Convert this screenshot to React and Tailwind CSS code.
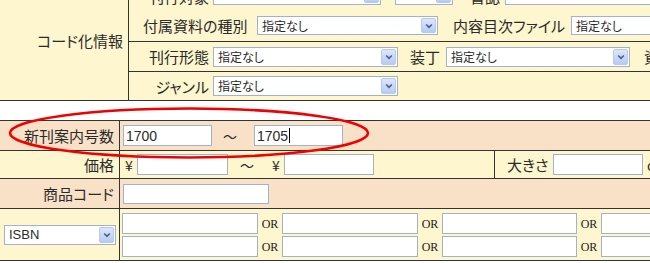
import React from "react";

const Chev = () => (
  <svg width="8" height="6" viewBox="0 0 8 6">
    <path d="M1.2 1.5 L4 4.3 L6.8 1.5" stroke="#4a5d8a" strokeWidth="1.6" fill="none" />
  </svg>
);

function Select({ className, text, textClass }) {
  return (
    <div className={"relative shrink-0 bg-white border border-[#9fb3cc] flex items-center " + className}>
      <span className={"pl-[4px] whitespace-nowrap " + (textClass || "text-[12px]")}>{text}</span>
      <div className="absolute right-[1px] top-[1px] bottom-[1px] w-[15px] rounded-[2px] border border-[#b9c9ea] bg-gradient-to-b from-[#dbe6fc] to-[#b7cbf3] flex items-center justify-center">
        <Chev />
      </div>
    </div>
  );
}

function Input({ className, children }) {
  return (
    <div className={"shrink-0 bg-white border border-[#9fb3cc] flex items-center pl-[2px] font-['Liberation_Sans',sans-serif] text-[14px] " + className}>
      {children}
    </div>
  );
}

const Or = () => (
  <div className="w-[24px] shrink-0 text-center font-['Liberation_Serif',serif] text-[12px] text-[#222]">OR</div>
);

export default function App() {
  return (
    <div className="relative w-[650px] h-[263px] overflow-hidden bg-white text-[#2a2a2a] font-['Noto_Sans_CJK_JP',sans-serif] [font-feature-settings:'palt'] leading-none">
      {/* top section */}
      <div className="flex h-[101px] bg-[#fdf6cf] border-b border-[#333]">
        <div className="w-[129px] shrink-0 border-r border-[#333] flex items-center justify-end pr-[5px] pb-[20px] text-[15px]">
          コード化情報
        </div>
        <div className="flex-1 min-w-0 flex flex-col">
          <div className="h-[42px] border-b border-[#333] flex flex-col">
            <div className="h-[10px] overflow-hidden flex items-end whitespace-nowrap">
              <div className="w-[84px] shrink-0 text-right pr-[4px] text-[15px] mb-[6px]">刊行対象</div>
              <Select className="w-[168px] h-[19px] mb-[5px]" text="" />
              <Select className="w-[58px] h-[19px] mb-[5px] ml-[14px]" text="AND" textClass="text-[12px] font-['Liberation_Sans',sans-serif]" />
              <div className="ml-[17px] w-[35px] shrink-0 text-[15px] mb-[6px]">書誌</div>
              <Input className="w-[160px] h-[20px] mb-[5px]" />
            </div>
            <div className="flex-1 flex items-center whitespace-nowrap">
              <div className="ml-[14px] w-[114px] shrink-0 text-[15px]">付属資料の種別</div>
              <Select className="w-[181px] h-[19px]" text="指定なし" />
              <div className="ml-[15px] w-[118px] shrink-0 text-[15px]">内容目次ファイル</div>
              <Select className="w-[100px] h-[19px]" text="指定なし" />
            </div>
          </div>
          <div className="h-[30px] border-b border-[#333] flex items-center whitespace-nowrap">
            <div className="w-[84px] shrink-0 text-right pr-[4px] text-[15px]">刊行形態</div>
            <Select className="w-[185px] h-[20px]" text="指定なし" />
            <div className="ml-[12px] w-[36px] shrink-0 text-[15px]">装丁</div>
            <Select className="w-[184px] h-[20px]" text="指定なし" />
            <div className="ml-[14px] shrink-0 text-[15px]">資</div>
          </div>
          <div className="flex-1 flex items-center whitespace-nowrap">
            <div className="w-[84px] shrink-0 text-right pr-[4px] text-[15px]">ジャンル</div>
            <Select className="w-[185px] h-[20px]" text="指定なし" />
          </div>
        </div>
      </div>

      {/* second table */}
      <div className="mt-[19px] border-y border-[#333] whitespace-nowrap">
        <div className="flex h-[30px] border-b border-[#333] bg-[#f9e1c8]">
          <div className="w-[120px] shrink-0 border-r border-[#333] flex items-center justify-end pr-[5px] text-[15px]">
            新刊案内号数
          </div>
          <div className="flex items-center pl-[3px]">
            <Input className="w-[89px] h-[21px]">1700</Input>
            <div className="ml-[11px] w-[14px] shrink-0 text-[14px]">～</div>
            <Input className="ml-[17px] w-[89px] h-[21px]">
              1705<span className="inline-block w-[1px] h-[15px] bg-black ml-[1px]" />
            </Input>
          </div>
        </div>

        <div className="flex h-[28px] border-b border-[#333] bg-[#fdf6cf]">
          <div className="w-[120px] shrink-0 border-r border-[#333] flex items-center justify-end pr-[5px] text-[15px]">
            価格
          </div>
          <div className="w-[375px] shrink-0 border-r border-[#333] flex items-center pl-[5px]">
            <div className="w-[9px] shrink-0 text-[14px]">¥</div>
            <Input className="ml-[3px] w-[91px] h-[21px]" />
            <div className="ml-[12px] w-[14px] shrink-0 text-[14px]">～</div>
            <div className="ml-[18px] w-[9px] shrink-0 text-[14px]">¥</div>
            <Input className="ml-[3px] w-[90px] h-[21px]" />
          </div>
          <div className="flex items-center">
            <div className="ml-[12px] w-[46px] shrink-0 text-[15px]">大きさ</div>
            <Input className="w-[90px] h-[21px]" />
            <div className="ml-[4px] text-[14px]">cm</div>
          </div>
        </div>

        <div className="flex h-[30px] border-b border-[#333] bg-[#f9e1c8]">
          <div className="w-[120px] shrink-0 border-r border-[#333] flex items-center justify-end pr-[5px] text-[15px]">
            商品コード
          </div>
          <div className="flex items-center pl-[3px]">
            <Input className="w-[146px] h-[20px]" />
          </div>
        </div>

        <div className="flex h-[51px] bg-[#fdf6cf]">
          <div className="w-[120px] shrink-0 border-r border-[#333] flex items-center pl-[4px]">
            <Select className="w-[112px] h-[20px]" text="ISBN" textClass="text-[13px] font-['Liberation_Sans',sans-serif]" />
          </div>
          <div className="flex flex-col gap-[2px] pt-[4px] pl-[2px]">
            {[0, 1].map((r) => (
              <div key={r} className="flex items-center">
                <Input className="w-[136px] h-[21px]" />
                <Or />
                <Input className="w-[136px] h-[21px]" />
                <Or />
                <Input className="w-[135px] h-[21px]" />
                <Or />
                <Input className="w-[136px] h-[21px]" />
              </div>
            ))}
          </div>
        </div>
      </div>

      <svg className="absolute left-0 top-0 pointer-events-none" width="650" height="263">
        <ellipse cx="189" cy="133" rx="179" ry="24.5" stroke="#f00000" strokeWidth="2.6" fill="none" />
      </svg>
    </div>
  );
}
